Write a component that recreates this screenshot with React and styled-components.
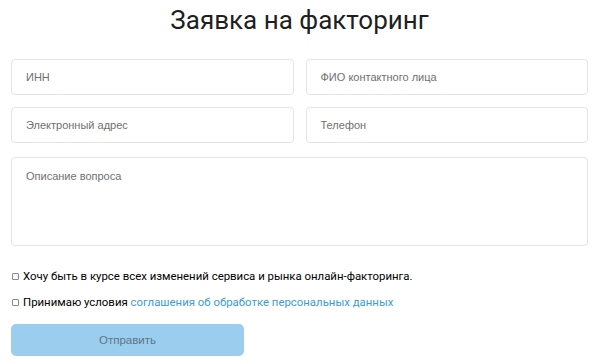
import React from 'react'
import styled, { createGlobalStyle } from 'styled-components'

const GlobalStyle = createGlobalStyle`
  html, body {
    margin: 0;
    padding: 0;
    background: #fff;
  }
  body {
    font-family: 'Liberation Sans', Arial, sans-serif;
    color: #1e1e1e;
  }
`

const Page = styled.div`
  width: 600px;
  box-sizing: border-box;
  padding: 0 12px 0 11px;
`

const Title = styled.h1`
  margin: 0;
  padding-top: 3px;
  height: 56px;
  font-family: Roboto, 'Noto Sans', sans-serif;
  font-weight: 400;
  font-size: 26px;
  line-height: 34px;
  text-align: center;
  color: #1f1f1f;
`

const Grid = styled.div`
  display: grid;
  grid-template-columns: 1fr 1fr;
  gap: 12px;
`

const Field = styled.div`
  box-sizing: border-box;
  height: ${(p) => (p.tall ? '89px' : '36px')};
  border: 1px solid #e4e4e4;
  border-radius: 4px;
  padding: ${(p) => (p.tall ? '12px 14px' : '0 14px')};
  display: flex;
  align-items: ${(p) => (p.tall ? 'flex-start' : 'center')};
  font-size: 11px;
  color: #707070;
  grid-column: ${(p) => (p.wide ? '1 / -1' : 'auto')};
  margin-top: ${(p) => (p.wide ? '2px' : '0')};
`

const Checks = styled.div`
  display: flex;
  flex-direction: column;
  gap: 12px;
  margin-top: 23px;
`

const CheckRow = styled.label`
  display: flex;
  align-items: center;
  gap: 4px;
  font-family: Roboto, 'Liberation Sans', sans-serif;
  font-weight: 400;
  font-size: 11.4px;
  line-height: 14px;
  color: #000;
`

const Box = styled.span`
  box-sizing: border-box;
  width: 7px;
  height: 7px;
  border: 1px solid #8a8a8a;
  border-radius: 1px;
  margin-left: 1px;
  flex-shrink: 0;
`

const Link = styled.a`
  color: #3d9bd4;
  text-decoration: none;
`

const Button = styled.button`
  margin-top: 15px;
  width: 233px;
  height: 32px;
  border: none;
  border-radius: 5px;
  background: #9bcdee;
  color: #5d7687;
  font-family: 'Liberation Sans', Arial, sans-serif;
  font-size: 11.5px;
  cursor: pointer;
`

export default function App() {
  return (
    <>
      <GlobalStyle />
      <Page>
        <Title>Заявка на факторинг</Title>
        <Grid>
          <Field>ИНН</Field>
          <Field>ФИО контактного лица</Field>
          <Field>Электронный адрес</Field>
          <Field>Телефон</Field>
          <Field wide tall>Описание вопроса</Field>
        </Grid>
        <Checks>
          <CheckRow>
            <Box />
            <span>Хочу быть в курсе всех изменений сервиса и рынка онлайн-факторинга.</span>
          </CheckRow>
          <CheckRow>
            <Box />
            <span>
              Принимаю условия <Link href="#">соглашения об обработке персональных данных</Link>
            </span>
          </CheckRow>
        </Checks>
        <Button>Отправить</Button>
      </Page>
    </>
  )
}
